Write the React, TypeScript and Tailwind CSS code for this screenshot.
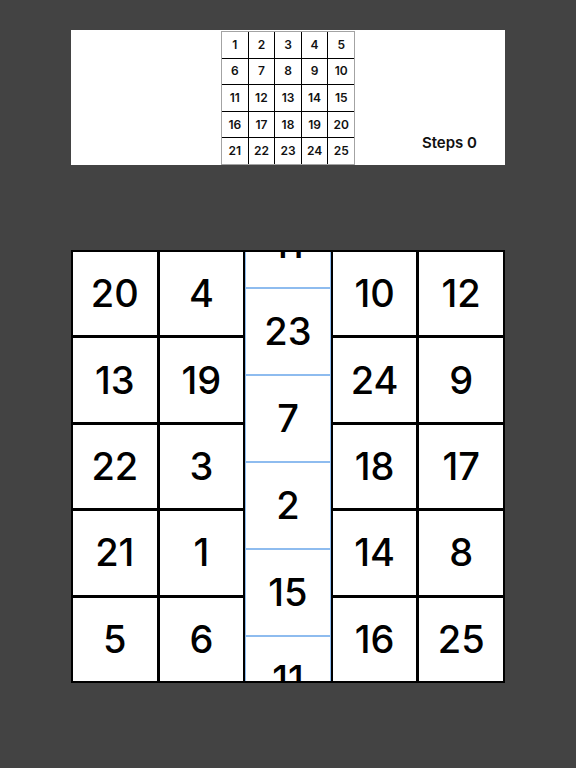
import React from "react";

const grid: number[][] = [
  [20, 4, 0, 10, 12],
  [13, 19, 0, 24, 9],
  [22, 3, 0, 18, 17],
  [21, 1, 0, 14, 8],
  [5, 6, 0, 16, 25],
];

const shifted = [11, 23, 7, 2, 15, 11];

const font = { fontFamily: "Inter, 'Noto Sans', sans-serif" };

export default function App() {
  const cols = [0, 1, 2, 3, 4];
  return (
    <div className="w-[576px] h-[768px] bg-[#434343] pt-[30px]" style={font}>
      <div className="mx-auto w-[434px] h-[135px] bg-white grid grid-cols-[1fr_134px_1fr]">
        <div />
        <div className="mt-[1px] w-[134px] h-[134px] border border-[#a3a3a3] bg-black grid grid-cols-5 gap-px">
          {Array.from({ length: 25 }, (_, i) => (
            <div
              key={i}
              className="bg-white flex items-center justify-center text-[12px] font-semibold text-[#111]"
            >
              {i + 1}
            </div>
          ))}
        </div>
        <div className="flex items-end justify-end pr-[28px] pb-[13px]">
          <span className="text-[15px] leading-[18px] font-semibold text-[#111]">Steps 0</span>
        </div>
      </div>

      <div className="mx-auto mt-[85px] w-[434px] h-[433px] bg-black p-[2px] flex gap-[3px]">
        {cols.map((c) =>
          c === 2 ? (
            <div key={c} className="flex-1 -mx-px px-px bg-[#8ebcef] overflow-hidden flex flex-col gap-[2px]">
              {shifted.map((n, i) => (
                <div
                  key={i}
                  className={`shrink-0 h-[85px] bg-white flex items-center justify-center text-[38px] font-medium text-black ${
                    i === 0 ? "-mt-[50px]" : ""
                  }`}
                >
                  {n}
                </div>
              ))}
            </div>
          ) : (
            <div key={c} className="flex-1 flex flex-col gap-[3px]">
              {grid.map((row, r) => (
                <div
                  key={r}
                  className="flex-1 bg-white flex items-center justify-center text-[38px] font-medium text-black"
                >
                  {row[c]}
                </div>
              ))}
            </div>
          )
        )}
      </div>
    </div>
  );
}
